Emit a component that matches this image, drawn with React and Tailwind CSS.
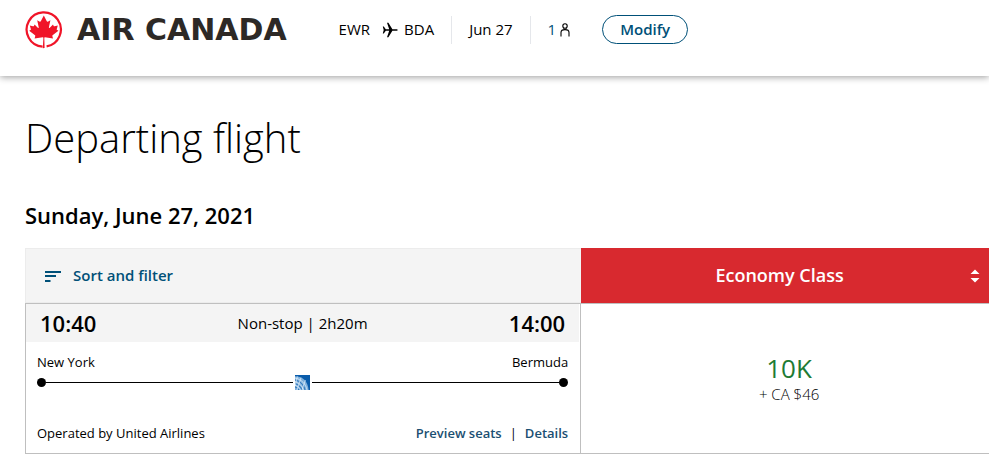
import React from "react";

const flight = {
  from: "EWR",
  to: "BDA",
  departCity: "New York",
  arriveCity: "Bermuda",
  departTime: "10:40",
  arriveTime: "14:00",
  stops: "Non-stop",
  duration: "2h20m",
  operator: "United Airlines",
};

const MapleLeafIcon = () => (
  <svg viewBox="0 0 38 38" className="h-[38px] w-[38px] shrink-0" fill="#f01428" aria-hidden="true">
    <path
      d="M17.6 35.6 A17.1 17.1 0 1 1 21.6 35.4"
      fill="none"
      stroke="#f01428"
      strokeWidth="2.2"
    />
    <path d="M18.8 4.6 L21.8 10.2 C22.2 10.8 22.7 10.7 23.2 10.4 L25.4 9.3 L23.9 16.2 C23.7 17 24.3 17.2 24.8 16.7 L28 13.4 L28.7 15 C28.9 15.4 29.2 15.4 29.6 15.3 L32.8 14.6 L31.7 18.2 C31.6 18.7 31.8 18.9 32.2 19.1 L33.4 19.7 L27.6 24.3 C27.2 24.6 27.3 24.9 27.4 25.2 L28 27.5 L20 26.2 C19.5 26.2 19.3 26.4 19.3 26.8 L19.6 37 L17.8 37.2 L18.4 26.8 C18.4 26.4 18.2 26.2 17.7 26.2 L9.6 27.5 L10.2 25.2 C10.3 24.9 10.4 24.6 10 24.3 L4.2 19.7 L5.4 19.1 C5.8 18.9 6 18.7 5.9 18.2 L4.8 14.6 L8 15.3 C8.4 15.4 8.7 15.4 8.9 15 L9.6 13.4 L12.8 16.7 C13.3 17.2 13.9 17 13.7 16.2 L12.2 9.3 L14.4 10.4 C14.9 10.7 15.4 10.8 15.8 10.2 Z" />
  </svg>
);

const PlaneIcon = () => (
  <svg viewBox="0 0 16 16" className="h-4 w-4" aria-hidden="true">
    <path d="M0.8 4.6 H1.8 L3.8 7.2 H7.2 L5 0.8 H6.4 L10.4 7.2 H14 C15.2 7.3 15.8 7.6 15.8 8 S15.2 8.7 14 8.8 H10.4 L6.4 15.2 H5 L7.2 8.8 H3.8 L1.8 11.4 H0.8 L1.7 8 Z" />
  </svg>
);

const PassengerIcon = () => (
  <svg viewBox="0 0 10 14" className="h-[14px] w-[10px]" fill="none" stroke="black" strokeWidth="1.1" aria-hidden="true">
    <circle cx="5" cy="3" r="2.2" />
    <path d="M1 13.5 V9.5 C1 7.6 2.6 6.6 5 6.6 S9 7.6 9 9.5 V13.5" />
    <path d="M3.4 5 L5 6.8 L6.6 5" strokeWidth="0.9" />
  </svg>
);

const FilterIcon = () => (
  <svg viewBox="0 0 16 12" className="h-3 w-4" stroke="#005078" strokeWidth="2" aria-hidden="true">
    <path d="M0 2 H16 M0 6 H11 M0 11 H5.5" />
  </svg>
);

const SortIcon = () => (
  <svg viewBox="0 0 10 14" className="h-[14px] w-[10px]" fill="white" aria-hidden="true">
    <path d="M5 0.5 L9.5 5 H0.5 Z M5 13.5 L9.5 9 H0.5 Z" />
  </svg>
);

const UnitedIcon = () => (
  <svg viewBox="0 0 15 15" className="h-[15px] w-[15px]" role="img" aria-label="United Airlines">
    <rect width="15" height="15" fill="#0a5cab" />
    <path d="M0 1.2 C7 1 13 6 13.6 15 H0 Z" fill="#7fb0dc" />
    <g fill="none" stroke="#0a5cab" strokeWidth="0.7">
      <path d="M0 5 C5 6 9 10 10 15" />
      <path d="M0 8.5 C3.5 9.5 6 12 7 15" />
      <path d="M0 12 C2 12.5 3 13.5 4 15" />
    </g>
    <g fill="none" stroke="#e4f0fa" strokeWidth="0.7">
      <path d="M0 3 C6 4 11 9 12 15" />
      <path d="M0 6.7 C4 7.7 7.4 11 8.5 15" />
      <path d="M0 10.3 C2.8 11 4.6 13 5.5 15" />
      <path d="M2 15 L6 2.5 M7 15 L10.4 5 M0 11 L2.4 1.5" />
    </g>
  </svg>
);

const Header = () => (
  <header className="flex h-[76px] items-start gap-[52px] bg-white pl-[25px] shadow-[0_1px_7px_rgba(0,0,0,0.4)]">
    <a href="#" className="flex h-[60px] shrink-0 items-center gap-[14px]">
      <MapleLeafIcon />
      <span className="font-['DejaVu_Sans'] text-[30px] leading-none font-bold whitespace-nowrap text-[#2d2926]">
        AIR CANADA
      </span>
    </a>
    <div className="flex h-[59px] items-center text-[15px]">
      <div className="flex items-center pr-[17px]">
        <span>{flight.from}</span>
        <span className="mr-1.5 ml-3">
          <PlaneIcon />
        </span>
        <span>{flight.to}</span>
      </div>
      <div className="flex h-7 items-center border-x border-gray-200 px-[17px]">Jun 27</div>
      <div className="flex items-center gap-1 pr-8 pl-[17px]">
        <span className="text-[#005078]">1</span>
        <PassengerIcon />
      </div>
      <button className="h-[29px] rounded-full border border-[#005078] px-[17px] font-semibold text-[#005078]">
        Modify
      </button>
    </div>
  </header>
);

const FlightCard = () => (
  <article className="h-[151px] border border-[#bfbfbf]">
    <div className="mr-px flex h-[38px] items-center justify-between bg-[#f4f4f4] px-[14px]">
      <span className="text-[22px] font-semibold">{flight.departTime}</span>
      <span className="text-[15px]">
        {flight.stops} | {flight.duration}
      </span>
      <span className="text-[22px] font-semibold">{flight.arriveTime}</span>
    </div>
    <div className="pr-3 pl-[11px] text-[13px]">
      <div className="flex justify-between pt-[10px] leading-5">
        <span>{flight.departCity}</span>
        <span>{flight.arriveCity}</span>
      </div>
      <div className="flex h-5 items-center">
        <span className="h-[9px] w-[9px] rounded-full bg-black" />
        <span className="h-px flex-1 bg-black" />
        <span className="mx-0.5">
          <UnitedIcon />
        </span>
        <span className="h-px flex-1 bg-black" />
        <span className="h-[9px] w-[9px] rounded-full bg-black" />
      </div>
      <div className="flex justify-between pt-[31px] leading-5">
        <span>Operated by {flight.operator}</span>
        <div className="flex gap-2">
          <a href="#" className="font-semibold text-[#1b4f72]">
            Preview seats
          </a>
          <span>|</span>
          <a href="#" className="font-semibold text-[#1b4f72]">
            Details
          </a>
        </div>
      </div>
    </div>
  </article>
);

const App = () => {
  return (
    <div className="min-h-screen overflow-x-hidden bg-white font-['Open_Sans',sans-serif] text-black">
      <Header />
      <main className="pl-[25px]">
        <h1 className="pt-8 text-[40px] leading-[60px] font-light">Departing flight</h1>
        <h2 className="pt-8 text-[22px] leading-[30px] font-semibold">Sunday, June 27, 2021</h2>

        {/* Results */}
        <div className="grid grid-cols-[15fr_11fr] pt-[18px]">
          <div className="flex h-[55px] items-center border border-r-0 border-[#ececec] bg-[#f4f4f4] pl-[19px]">
            <button className="flex items-center gap-3 text-[15px] font-semibold text-[#005078]">
              <FilterIcon />
              Sort and filter
            </button>
          </div>
          <button className="flex h-[55px] items-center bg-[#d8292f] pr-[9px] pl-2 text-white">
            <span className="flex-1 text-[18px] font-semibold">Economy Class</span>
            <SortIcon />
          </button>

          <FlightCard />
          <button className="flex flex-col items-center justify-center border-y border-[#bfbfbf] pt-0.5 pl-2">
            <span className="text-[26px] leading-7 text-[#1e7b34]">10K</span>
            <span className="text-[15px] leading-6 font-light">+ CA $46</span>
          </button>
        </div>
      </main>
    </div>
  );
};

export default App;
